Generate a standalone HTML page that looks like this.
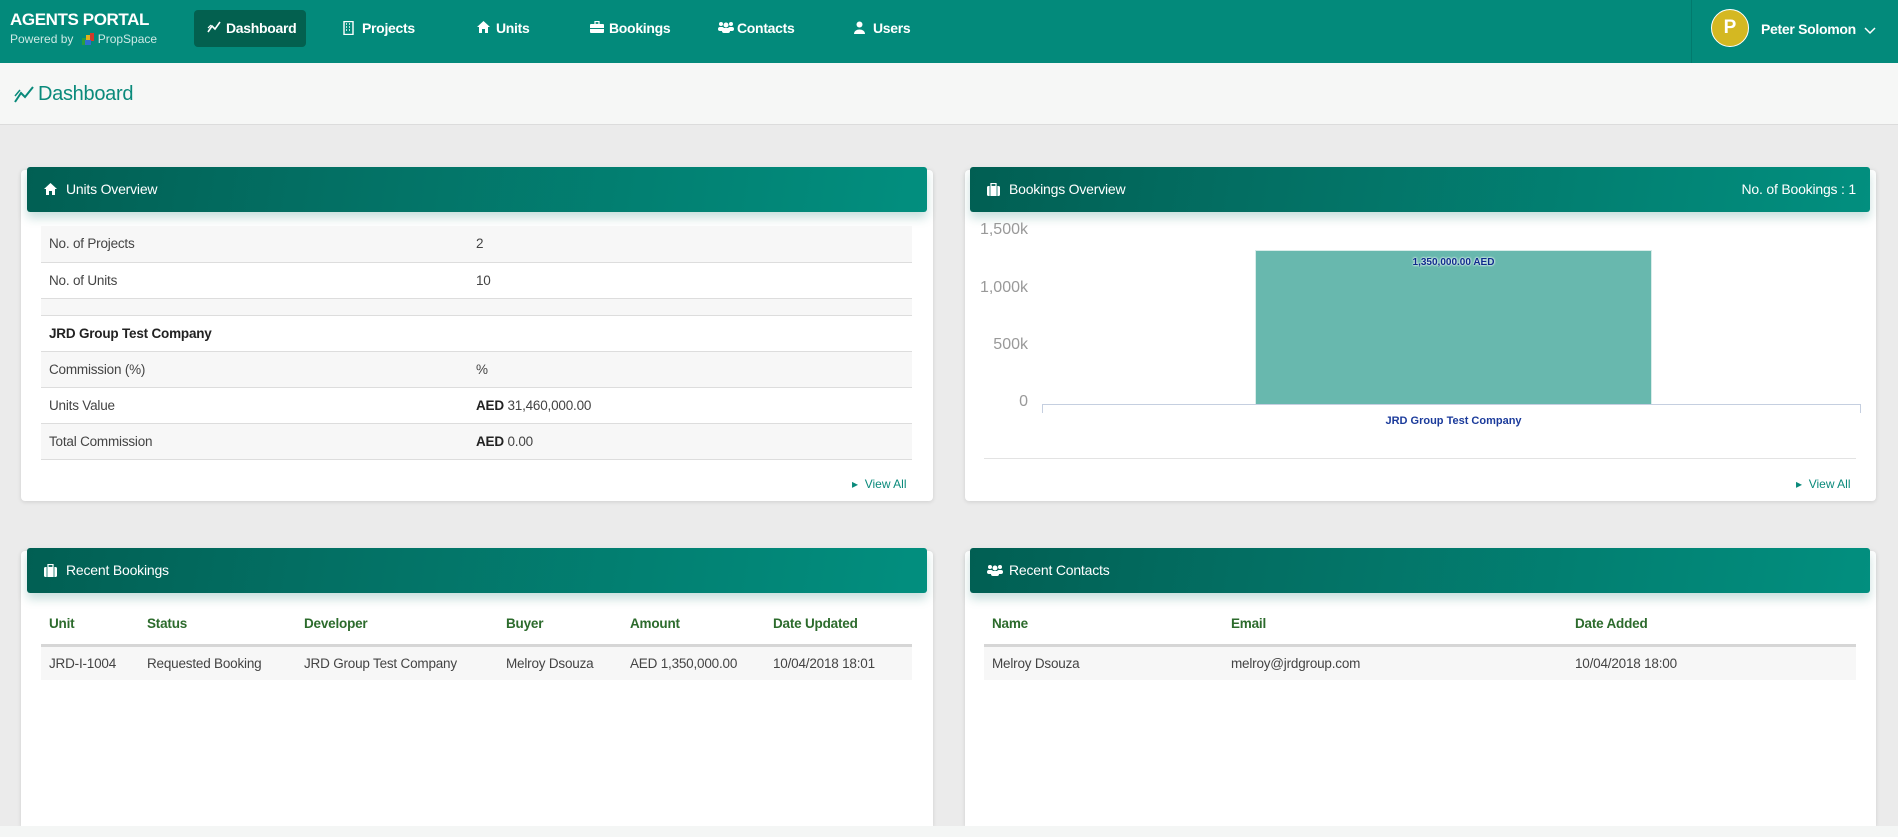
<!DOCTYPE html>
<html><head><meta charset="utf-8"><style>
*{box-sizing:border-box;margin:0;padding:0}
body{width:1898px;height:837px;overflow:hidden;background:#ebebeb;font-family:"Liberation Sans",sans-serif;color:#333;position:relative}
.abs{position:absolute}
#nav{left:0;top:0;width:1898px;height:63px;background:#038a7b}
.nv{position:absolute;top:19px;color:#fff;font-size:14px;font-weight:bold;line-height:18px;white-space:nowrap;letter-spacing:-.3px}
.nv svg{position:absolute;left:-19px;top:2px}
#sub{left:0;top:63px;width:1898px;height:62px;background:#f6f7f6;border-bottom:1px solid #dcdcdc}
.card{position:absolute;background:#fff;border-radius:4px;box-shadow:0 1px 4px rgba(0,0,0,.12)}
.hd{position:absolute;height:45px;border-radius:3px;background:linear-gradient(100deg,#015f53 0%,#036e62 30%,#028f7f 100%);box-shadow:0 6px 10px rgba(2,110,98,.22);color:#fff;font-size:14px;line-height:45px;padding-left:39px;letter-spacing:-.2px}
.hd svg{position:absolute;left:17px;top:16px}
table{position:absolute;border-collapse:collapse;font-size:13.5px;color:#444;letter-spacing:-.2px}
td{padding:0 8px;white-space:nowrap}
.ov tr{height:36px;border-bottom:1px solid #ddd}
.ov tr.st{background:#f7f7f7}
.ov tr.e{height:17px}
.lt th{color:#2c6b2c;text-align:left;font-size:13.5px;padding:0 8px;height:41px;border-bottom:3px solid #d6d6d6}
.lt td{height:35px;background:#f7f7f7}
.va{position:absolute;color:#0a8a7b;font-size:12px}
.yl{position:absolute;right:870px;color:#999;font-size:16px;text-align:right}
</style></head><body>
<div id="nav" class="abs">
  <div class="abs" style="left:10px;top:10px;color:#fff;font-weight:bold;font-size:17px;letter-spacing:-.4px">AGENTS PORTAL</div>
  <div class="abs" style="left:10px;top:32px;color:#cde9e5;font-size:12px">Powered by
    <svg width="14" height="14" viewBox="0 0 14 14" style="vertical-align:-3px;margin:0 3px 0 4px"><rect x="1" y="6" width="4" height="7" fill="#2a9f3c"/><rect x="5" y="3" width="4" height="10" fill="#e0b21c"/><rect x="9" y="1" width="4" height="8" fill="#d23a2a"/><rect x="4" y="8" width="6" height="5" fill="#2f6fd0"/></svg>PropSpace</div>
  <div class="abs" style="left:194px;top:10px;width:112px;height:37px;background:#03604f;border-radius:4px"></div>
  <div class="nv" style="left:226px"><svg width="14" height="12" viewBox="0 0 14 12"><path d="M1 11 L5 5 L8 8 L13 1" stroke="#fff" stroke-width="1.6" fill="none"/><path d="M1 7 L4 4" stroke="#fff" stroke-width="1.2"/></svg>Dashboard</div>
  <div class="nv" style="left:362px"><svg width="11" height="14" viewBox="0 0 11 14"><rect x="1" y="0.5" width="9" height="13" fill="none" stroke="#fff" stroke-width="1.4"/><path d="M3 3h1M6 3h1M3 6h1M6 6h1M3 9h1M6 9h1" stroke="#fff" stroke-width="1.4"/></svg>Projects</div>
  <div class="nv" style="left:496px"><svg width="13" height="12" viewBox="0 0 13 12"><path d="M6.5 0 L13 6 H11 V12 H8 V8 H5 V12 H2 V6 H0 Z" fill="#fff"/></svg>Units</div>
  <div class="nv" style="left:609px"><svg width="14" height="12" viewBox="0 0 14 12"><rect x="0" y="3" width="14" height="9" rx="1" fill="#fff"/><rect x="5" y="0.5" width="4" height="3" fill="none" stroke="#fff" stroke-width="1.2"/><rect x="0" y="7" width="14" height="1" fill="#038a7b"/></svg>Bookings</div>
  <div class="nv" style="left:737px"><svg width="16" height="12" viewBox="0 0 16 12"><circle cx="3" cy="3" r="2" fill="#fff"/><circle cx="13" cy="3" r="2" fill="#fff"/><circle cx="8" cy="4" r="2.5" fill="#fff"/><rect x="0" y="6" width="6" height="4" rx="2" fill="#fff"/><rect x="10" y="6" width="6" height="4" rx="2" fill="#fff"/><rect x="4" y="7" width="8" height="5" rx="2" fill="#fff"/></svg>Contacts</div>
  <div class="nv" style="left:873px"><svg width="11" height="13" viewBox="0 0 11 13"><circle cx="5.5" cy="3.5" r="3" fill="#fff"/><path d="M0 13 C0 7 11 7 11 13Z" fill="#fff"/></svg>Users</div>
  <div class="abs" style="left:1691px;top:0;width:1px;height:63px;background:#027a6d"></div>
  <div class="abs" style="left:1711px;top:9px;width:38px;height:38px;border-radius:50%;background:#d4b822;border:1px solid #fff;color:#fff;font-weight:bold;font-size:19px;text-align:center;line-height:36px">P</div>
  <div class="abs" style="left:1761px;top:21px;color:#fff;font-size:14px;font-weight:bold;letter-spacing:-.3px">Peter Solomon</div>
  <svg class="abs" style="left:1864px;top:27px" width="12" height="8" viewBox="0 0 12 8"><path d="M1 1 L6 6 L11 1" stroke="#fff" stroke-width="1.5" fill="none"/></svg>
</div>
<div id="sub" class="abs">
  <svg class="abs" style="left:14px;top:22px" width="20" height="18" viewBox="0 0 20 18"><path d="M1 17 L7 8 L11 12 L19 2" stroke="#0a8a7b" stroke-width="2" fill="none"/><path d="M1 11 L6 5" stroke="#0a8a7b" stroke-width="1.5"/></svg>
  <div class="abs" style="left:38px;top:20px;color:#0a8a7b;font-size:20px;letter-spacing:-.3px">Dashboard</div>
</div>

<!-- Units Overview -->
<div class="card" style="left:21px;top:170px;width:912px;height:331px"></div>
<div class="hd" style="left:27px;top:167px;width:900px"><svg width="13" height="12" viewBox="0 0 13 12"><path d="M6.5 0 L13 6 H11 V12 H8 V8 H5 V12 H2 V6 H0 Z" fill="#fff"/></svg>Units Overview</div>
<table class="ov" style="left:41px;top:226px;width:871px">
<tr class="st"><td style="width:427px">No. of Projects</td><td>2</td></tr>
<tr><td>No. of Units</td><td>10</td></tr>
<tr class="st e"><td></td><td></td></tr>
<tr><td style="font-weight:bold;color:#222">JRD Group Test Company</td><td></td></tr>
<tr class="st"><td>Commission (%)</td><td>%</td></tr>
<tr><td>Units Value</td><td><b style="color:#222">AED</b> 31,460,000.00</td></tr>
<tr class="st"><td>Total Commission</td><td><b style="color:#222">AED</b> 0.00</td></tr>
</table>
<div class="va" style="left:852px;top:477px">&#9656;&nbsp; View All</div>

<!-- Bookings Overview -->
<div class="card" style="left:965px;top:170px;width:911px;height:331px"></div>
<div class="hd" style="left:970px;top:167px;width:900px"><svg width="13" height="13" viewBox="0 0 13 13"><rect x="0" y="3" width="13" height="10" rx="1.5" fill="#fff"/><rect x="4" y="0.5" width="5" height="3" fill="none" stroke="#fff" stroke-width="1.2"/><path d="M3 3v10M10 3v10" stroke="#036e62" stroke-width="0.8"/></svg>Bookings Overview<span style="position:absolute;right:14px">No. of Bookings : 1</span></div>
<div class="yl" style="top:221px">1,500k</div>
<div class="yl" style="top:279px">1,000k</div>
<div class="yl" style="top:336px">500k</div>
<div class="yl" style="top:393px">0</div>
<div class="abs" style="left:1042px;top:404px;width:819px;height:1px;background:#c5cfe0"></div>
<div class="abs" style="left:1042px;top:404px;width:1px;height:9px;background:#c5cfe0"></div>
<div class="abs" style="left:1860px;top:404px;width:1px;height:9px;background:#c5cfe0"></div>
<div class="abs" style="left:1255px;top:250px;width:397px;height:154px;background:#68b8ae;border:1px solid #d8ece9;border-bottom:none"></div>
<div class="abs" style="left:1255px;top:257px;width:397px;text-align:center;font-size:10px;font-weight:bold;color:#0d2b8c;text-shadow:0 0 2px #fff,0 0 2px #fff">1,350,000.00 AED</div>
<div class="abs" style="left:1255px;top:415px;width:397px;text-align:center;font-size:11px;font-weight:bold;color:#1b3b9b">JRD Group Test Company</div>
<div class="abs" style="left:984px;top:458px;width:872px;height:1px;background:#e3e3e3"></div>
<div class="va" style="left:1796px;top:477px">&#9656;&nbsp; View All</div>

<!-- Recent Bookings -->
<div class="card" style="left:21px;top:551px;width:912px;height:275px;border-radius:4px 4px 0 0"></div>
<div class="hd" style="left:27px;top:548px;width:900px"><svg width="13" height="13" viewBox="0 0 13 13"><rect x="0" y="3" width="13" height="10" rx="1.5" fill="#fff"/><rect x="4" y="0.5" width="5" height="3" fill="none" stroke="#fff" stroke-width="1.2"/><path d="M3 3v10M10 3v10" stroke="#036e62" stroke-width="0.8"/></svg>Recent Bookings</div>
<table class="lt" style="left:41px;top:604px;width:871px">
<tr><th style="width:98px">Unit</th><th style="width:157px">Status</th><th style="width:202px">Developer</th><th style="width:124px">Buyer</th><th style="width:143px">Amount</th><th>Date Updated</th></tr>
<tr><td>JRD-I-1004</td><td>Requested Booking</td><td>JRD Group Test Company</td><td>Melroy Dsouza</td><td>AED 1,350,000.00</td><td>10/04/2018 18:01</td></tr>
</table>

<!-- Recent Contacts -->
<div class="card" style="left:965px;top:551px;width:911px;height:275px;border-radius:4px 4px 0 0"></div>
<div class="hd" style="left:970px;top:548px;width:900px"><svg width="16" height="12" viewBox="0 0 16 12"><circle cx="3" cy="3" r="2" fill="#fff"/><circle cx="13" cy="3" r="2" fill="#fff"/><circle cx="8" cy="4" r="2.5" fill="#fff"/><rect x="0" y="6" width="6" height="4" rx="2" fill="#fff"/><rect x="10" y="6" width="6" height="4" rx="2" fill="#fff"/><rect x="4" y="7" width="8" height="5" rx="2" fill="#fff"/></svg>Recent Contacts</div>
<table class="lt" style="left:984px;top:604px;width:872px">
<tr><th style="width:239px">Name</th><th style="width:344px">Email</th><th>Date Added</th></tr>
<tr><td>Melroy Dsouza</td><td>melroy@jrdgroup.com</td><td>10/04/2018 18:00</td></tr>
</table>

<div class="abs" style="left:0;top:826px;width:1898px;height:11px;background:#f4f6f5"></div>
</body></html>
